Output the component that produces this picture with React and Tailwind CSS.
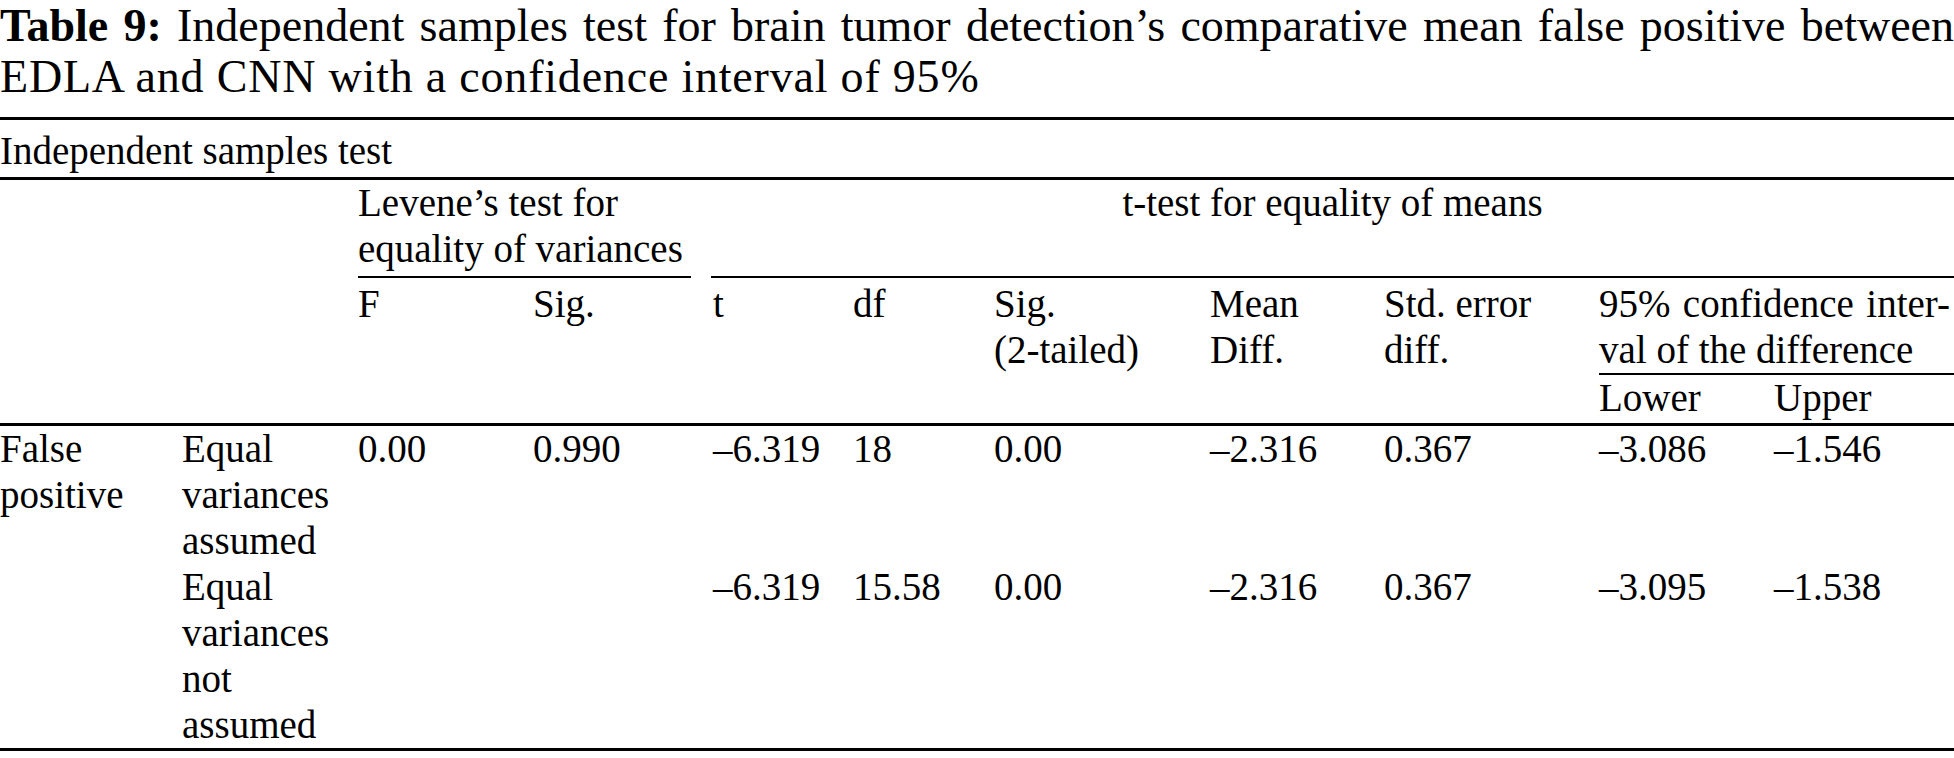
import React from "react";

const cols =
  "grid grid-cols-[182px_176px_175px_180px_140px_141px_216px_174px_215px_175px_180px]";

const rows = [
  {
    label: ["Equal", "variances", "assumed"],
    f: "0.00",
    sig: "0.990",
    t: "–6.319",
    df: "18",
    sig2: "0.00",
    mean: "–2.316",
    se: "0.367",
    lower: "–3.086",
    upper: "–1.546",
  },
  {
    label: ["Equal", "variances", "not", "assumed"],
    f: "",
    sig: "",
    t: "–6.319",
    df: "15.58",
    sig2: "0.00",
    mean: "–2.316",
    se: "0.367",
    lower: "–3.095",
    upper: "–1.538",
  },
];

function Lines({ items }) {
  return (
    <div>
      {items.map((line, i) => (
        <div key={i} className="whitespace-nowrap">
          {line}
        </div>
      ))}
    </div>
  );
}

export default function App() {
  return (
    <div className="w-[1954px] h-[758px] overflow-hidden bg-white text-black [font-family:'Liberation_Serif',serif]">
      {/* Caption */}
      <div className="pt-[2px] mb-[16px] text-[46px] leading-[48px]">
        <p className="text-justify [text-align-last:justify]">
          <span className="font-bold">Table 9:</span> Independent samples test
          for brain tumor detection’s comparative mean false positive between
        </p>
        <p className="mt-[3px] tracking-[0.8px]">
          EDLA and CNN with a confidence interval of 95%
        </p>
      </div>

      <div className="text-[39px] leading-[46px]">
        <div className="border-t-[3px] border-b-[3px] border-black pt-[8px] pb-[3px]">
          Independent samples test
        </div>

        {/* Header */}
        <div className={cols}>
          <div className="col-span-2" />
          <div className="col-span-2 mr-[22px] border-b-2 border-black pb-[4px]">
            <div>Levene’s test for</div>
            <div>equality of variances</div>
          </div>
          <div className="col-span-7 -ml-[2px] border-b-2 border-black text-center">
            t-test for equality of means
          </div>

          <div className="col-span-2" />
          <div className="pt-[3px]">F</div>
          <div className="pt-[3px]">Sig.</div>
          <div className="pt-[3px]">t</div>
          <div className="pt-[3px]">df</div>
          <div className="pt-[3px]">
            <Lines items={["Sig.", "(2-tailed)"]} />
          </div>
          <div className="pt-[3px]">
            <Lines items={["Mean", "Diff."]} />
          </div>
          <div className="pt-[3px]">
            <Lines items={["Std. error", "diff."]} />
          </div>
          <div className="col-span-2 pt-[3px] pb-[2px]">
            <div className="border-b-2 border-black">
              <div className="text-justify [text-align-last:justify] pr-[4px]">
                95% confidence inter-
              </div>
              <div>val of the difference</div>
            </div>
            <div className="grid grid-cols-[175px_1fr]">
              <div>Lower</div>
              <div>Upper</div>
            </div>
          </div>
        </div>

        {/* Body */}
        <div className={`${cols} border-t-[3px] border-b-[3px] border-black`}>
          <div className="row-span-2">
            <Lines items={["False", "positive"]} />
          </div>
          {rows.map((r, i) => (
            <React.Fragment key={i}>
              <Lines items={r.label} />
              <div>{r.f}</div>
              <div>{r.sig}</div>
              <div>{r.t}</div>
              <div>{r.df}</div>
              <div>{r.sig2}</div>
              <div>{r.mean}</div>
              <div>{r.se}</div>
              <div>{r.lower}</div>
              <div>{r.upper}</div>
            </React.Fragment>
          ))}
        </div>
      </div>
    </div>
  );
}
